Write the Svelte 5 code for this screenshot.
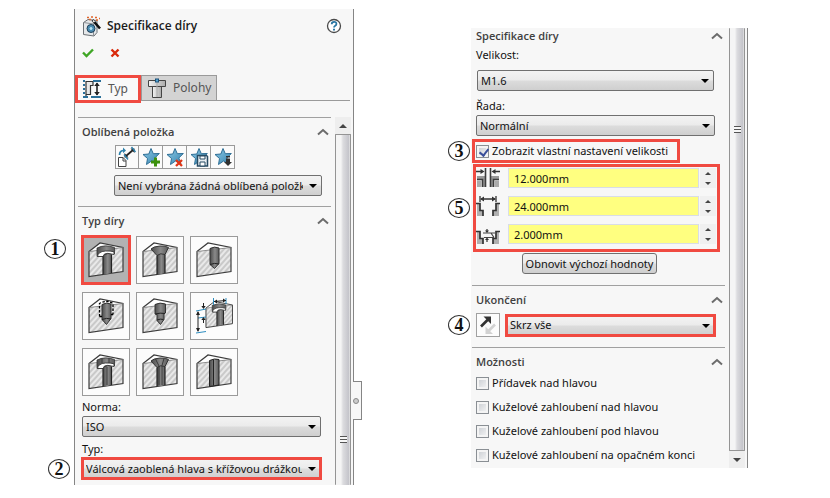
<script>
  const holes = [
    { id: 'counterbore', label: 'Válcové zahloubení' },
    { id: 'countersink', label: 'Kuželové zahloubení' },
    { id: 'drill', label: 'Díra' },
    { id: 'tap', label: 'Přímý závit' },
    { id: 'taper', label: 'Kuželový závit' },
    { id: 'legacy', label: 'Starší verze' },
    { id: 'slot-bore', label: 'Drážka s válcovým zahloubením' },
    { id: 'slot-sink', label: 'Drážka s kuželovým zahloubením' },
    { id: 'slot', label: 'Drážka' }
  ];
  const favorites = [
    { id: 'reset', label: 'Použít výchozí' },
    { id: 'add', label: 'Přidat oblíbenou' },
    { id: 'remove', label: 'Odstranit oblíbenou' },
    { id: 'save', label: 'Uložit oblíbenou' },
    { id: 'load', label: 'Načíst oblíbenou' }
  ];
  const options = [
    'Přídavek nad hlavou',
    'Kuželové zahloubení nad hlavou',
    'Kuželové zahloubení pod hlavou',
    'Kuželové zahloubení na opačném konci'
  ];
  let selected = $state('counterbore');
  let custom = $state(true);
  let sizes = $state([
    { id: 'through', label: 'Průměr průchozí díry', value: '12.000mm' },
    { id: 'bore', label: 'Průměr zahloubení', value: '24.000mm' },
    { id: 'depth', label: 'Hloubka zahloubení', value: '2.000mm' }
  ]);
  function step(i, d) {
    sizes[i].value = (parseFloat(sizes[i].value) + d).toFixed(3) + 'mm';
  }
</script>

{#snippet heading(text)}
  <header class="section-head">
    <h2>{text}</h2>
    <button class="bare" aria-label={'Sbalit ' + text}>
      <svg width="12" height="8" viewBox="0 0 12 8"><path d="M1 6.5 6 2l5 4.5" fill="none" stroke="#6c6c6c" stroke-width="2" /></svg>
    </button>
  </header>
{/snippet}

{#snippet combo(id, text, extra)}
  <div class="combo {extra}">
    <select {id} aria-label={text}><option>{text}</option></select>
  </div>
{/snippet}

{#snippet block(kind)}
  <path d="M7 15.500 18 7 41 11.500Z" fill="#fff" />
  <path d="M7 15.500 41 11.500V35.500L7 40.500Z" fill="#e9e9e9" />
  <path d="M7 15.500 41 11.500V35.500L7 40.500Z" fill="url(#hatch)" />
  <path d="M7 15.500 18 7 41 11.500V35.500L7 40.500Z" fill="none" stroke="#3c3c3c" stroke-width="1.200" />
  <path d="M7 15.500 41 11.500" stroke="#777" stroke-width=".8" />
  {#if kind === 'counterbore' || kind === 'slot-bore' || kind === 'legacy'}
    <path d="M21 18q4-2 8.500-.5V37L21 38.500z" fill="url(#metal)" />
    <path d="M15 12q8-4 17.500-.5V18q-3-1-5-1l-6 2v1.500H15z" fill="url(#metal)" stroke="#333" stroke-width=".8" />
    <path d="M15.500 20.500q.5-5 8-5.500 5-.3 8.500.8V18.500l-2.500-.5q-4-1.300-7 0l-1.500 2.500z" fill="#fff" stroke="#333" stroke-width=".9" />
    <path d="M21 20.500v18M29.500 18.500V37" stroke="#222" stroke-width="1.200" />
    {#if kind === 'slot-bore'}<path d="M20 10.500v4.500M27 10v5M25 19v18" stroke="#333" stroke-width=".9" />{/if}
  {:else if kind === 'countersink' || kind === 'slot-sink'}
    <path d="M21 18h8v19l-8 1.500z" fill="url(#metal)" />
    <path d="M15 13q2-2.500 9-3 6-.2 8.500 1.500L29 18.500q-4.500-2-8 1z" fill="url(#metal)" stroke="#333" />
    <path d="M21 19.500v19M29 18.500V37" stroke="#222" stroke-width="1.200" />
    {#if kind === 'slot-sink'}<path d="M19.500 11l3.500 7v19M28 10.500l-2 7V37" fill="none" stroke="#333" stroke-width=".9" />{/if}
  {:else if kind === 'drill'}
    <path d="M20 12.500q4.500-2.500 9-.5v15.500l-4.500 5-4.500-4z" fill="url(#metal)" stroke="#333" />
    <path d="M20 28.500q4.500-2 9-.5" fill="none" stroke="#222" />
  {:else if kind === 'tap'}
    <path d="M20 12.500q4.500-2.500 9-.5v14.500l-4.500 6-4.500-5z" fill="url(#metal)" stroke="#333" />
    <path d="M17.500 24.500V11.500q7-4 13.500 0V22.500M17.500 24.500h3M31 22.500h-2" fill="none" stroke="#000" stroke-width="1.300" stroke-dasharray="2.500 1.500" />
    <path d="M20 27.500q4.500-2 9-.5" fill="none" stroke="#222" />
  {:else if kind === 'taper'}
    <path d="M19 12.500q5-2.500 10.500-.5v9l-1.500 1v5.500l-3.500 5-3.500-4v-6l-2-.5z" fill="url(#metal)" stroke="#333" />
    <path d="M19.500 22q4.500-1.500 9.500-.5M21 28q3.500-1.500 6.500-.5" fill="none" stroke="#222" />
  {:else if kind === 'slot'}
    <path d="M19.500 12.500q5-2.500 9.500-1V37l-9.500 1.500z" fill="url(#metal)" stroke="#222" />
    <path d="M23.500 11.500v26" stroke="#222" />
  {/if}
{/snippet}

{#snippet star()}
  <path d="M11 2.500l2.300 5.200 6-.2-4.500 4.500 2.200 6-5.500-3-5 3.500 1-6L3 8.500l5.800-.5z" fill="url(#starblue)" stroke="#2f6f96" />
{/snippet}

<svg class="defs" aria-hidden="true">
  <defs>
    <pattern id="hatch" width="4" height="4" patternUnits="userSpaceOnUse" patternTransform="rotate(42)">
      <path d="M2 0V4" stroke="#a2a2a2" stroke-width=".9" />
    </pattern>
    <linearGradient id="metal"><stop offset="0" stop-color="#4b4b4b" /><stop offset=".55" stop-color="#8a8a8a" /><stop offset="1" stop-color="#5a5a5a" /></linearGradient>
    <linearGradient id="starblue" x2="1" y2="1"><stop offset="0" stop-color="#8cc9e6" /><stop offset="1" stop-color="#3583ae" /></linearGradient>
    <linearGradient id="steel"><stop offset="0" stop-color="#f4f4f4" /><stop offset="1" stop-color="#aaa" /></linearGradient>
  </defs>
</svg>

<main>
  <section class="panel left">
    <div class="title">
      <svg width="21" height="21" viewBox="0 0 21 21">
        <path d="M1.500 6.500 6 3.500l9 1v12l-3 3.500-10.500-1.500z" fill="#e5e7e9" stroke="#6b7075" />
        <path d="M1.500 6.500l10 1.500 3.500-3.500M11.500 8v12" fill="none" stroke="#8b9095" />
        <circle cx="9" cy="12.500" r="4" fill="#4f8db2" stroke="#1c3f58" />
        <circle cx="9" cy="12.500" r="2" fill="#b9e0f0" stroke="#3c86ad" />
        <path d="M10.500 4l7.500 8.500" stroke="#111" stroke-width="2.600" />
        <path d="M11 4.500l1.500 1.500" stroke="#fff" stroke-width="1.500" />
        <path d="M5 1.500h2M9 1h2M13 1.500h2M7 3.500h2M14 4h2M17 2.500h1" stroke="#e0642a" stroke-width="1.500" />
      </svg>
      <h1>Specifikace díry</h1>
      <button class="bare" aria-label="Nápověda">
        <svg width="16" height="16" viewBox="0 0 16 16">
          <circle cx="8" cy="8" r="6.500" fill="#fff" stroke="#4a4a4a" stroke-width="1.300" />
          <path d="M5.700 6.300q0-2.400 2.400-2.400t2.300 2q0 1.200-1.200 1.900T8 9.600" fill="none" stroke="#2a76a3" stroke-width="1.800" />
          <path d="M7 10.700h2v1.800H7z" fill="#2a76a3" />
        </svg>
      </button>
    </div>
    <div class="confirm">
      <button class="bare" aria-label="OK"><svg width="12" height="10" viewBox="0 0 12 10"><path d="M1 4.500 4.500 8 11 1.500" fill="none" stroke="#3fa625" stroke-width="2.400" /></svg></button>
      <button class="bare" aria-label="Storno"><svg width="10" height="10" viewBox="0 0 10 10"><path d="M1.500 1.500l7 7M8.500 1.500l-7 7" stroke="#d9290b" stroke-width="2.400" /></svg></button>
    </div>
    <nav class="tabs">
      <button class="tab active">
        <svg width="20" height="20" viewBox="0 0 20 20">
          <path d="M2 1v18" stroke="#2a6f99" stroke-width="2" stroke-dasharray="2 2" />
          <path d="M4 18.500V2.500h7v4H8.500v9H4" fill="#e8e8e8" stroke="#333" stroke-width="1.200" />
          <path d="M11 2h8M2 18h4M9 18h10" stroke="#2a6f99" stroke-width="2" />
          <path d="M15 4v12" stroke="#222" stroke-width="1.600" /><path d="M12.200 7 15 3.500l2.800 3.500zM12.200 13 15 16.500l2.800-3.500z" fill="#222" />
        </svg>
        Typ
      </button>
      <button class="tab">
        <svg width="20" height="20" viewBox="0 0 20 20">
          <path d="M5.500 8.500h9v11h-9z" fill="url(#steel)" stroke="#444" />
          <path d="M1.500 2.500h17v6h-17z" fill="url(#steel)" stroke="#444" />
          <path d="M10 4.500V19" stroke="#aaa" />
          <rect x="8.500" y="1" width="3" height="3" fill="#54a8d8" stroke="#1c527a" />
        </svg>
        Polohy
      </button>
    </nav>
    <div class="body">
      <div class="content">
        <section class="group favorites">
          {@render heading('Oblíbená položka')}
          <div class="fav-bar">
            {#each favorites as f}
              <button aria-label={f.label}>
                <svg width="22" height="22" viewBox="0 0 22 22">
                  {#if f.id === 'reset'}
                    <path d="M2.500 11.500h4.500l3 3v6H2.500zM7 11.500v3.500h3" fill="#fff" stroke="#444" />
                    <path d="M3.500 9q0-4.500 4.500-4.500" fill="none" stroke="#2d81ac" stroke-width="1.700" /><path d="M7 1.500l3 3-3 2.700z" fill="#2d81ac" />
                    <path d="M10 10l7-6" stroke="#222" stroke-width="1.800" /><path d="M8.500 11.500v-4.500l4 4.500zM18.500 2.500v4.500L14.500 2.500z" fill="#222" />
                    <path d="M8 8.500l4 5M15.500 1l4 5" stroke="#2d81ac" stroke-width="1.400" />
                  {:else}
                    {@render star()}
                    {#if f.id === 'add'}<path d="M15.500 11.500v9M11 16h9" stroke="#3c910d" stroke-width="3" />
                    {:else if f.id === 'remove'}<path d="M12 14l6 6M18 14l-6 6" stroke="#e03414" stroke-width="2.300" />
                    {:else if f.id === 'save'}
                      <path d="M9.500 9.500h9l1 1v9.500h-10z" fill="#e8eef2" stroke="#274a62" stroke-width="1.500" /><path d="M12 10h5v3h-5zM12 16h5v4h-5z" fill="#fff" stroke="#274a62" />
                    {:else}<path d="M14 10h4v1.500h-4zM14 12.500h4v3.500h2l-4 4-4-4h2z" fill="#303030" />{/if}
                  {/if}
                </svg>
              </button>
            {/each}
          </div>
          <div class="fav-select">{@render combo('favorite', 'Není vybrána žádná oblíbená položka', '')}</div>
        </section>
        <section class="group types">
          {@render heading('Typ díry')}
          <div class="grid">
            <span class="callout wide">1</span>
            {#each holes as h}
              <button class="tile" class:on={selected === h.id} aria-label={h.label} aria-pressed={selected === h.id} onclick={() => (selected = h.id)}>
                <svg width="46" height="46" viewBox="1 1 46 46">
                  {#if h.id === 'legacy'}
                    <g transform="translate(10.500 4) scale(.78)">{@render block('legacy')}</g>
                    <path d="M23.500 6v7M36 6v6M6 19l10-2M8 26l8-1M6 41l10-1.500" stroke="#2d8dc0" />
                    <path d="M24 9.500l12-1M8 20v19M13.500 11v5M13.500 26v5" stroke="#222" />
                    <path d="M24 9.500l3-2v4zM36 8.500l-3-2v4zM8 19l-2 4h4zM8 40l-2-4h4zM13.500 17l-2.200-3h4.400zM13.500 25l-2.200 3h4.400z" fill="#222" />
                  {:else}
                    {@render block(h.id)}
                  {/if}
                </svg>
              </button>
            {/each}
          </div>
          <label for="standard">Norma:</label>
          {@render combo('standard', 'ISO', '')}
          <label class="next" for="kind">Typ:</label>
          <div class="anchor">
            <span class="callout">2</span>
            {@render combo('kind', 'Válcová zaoblená hlava s křížovou drážkou', 'marked')}
          </div>
        </section>
      </div>
      <div class="scroll">
        <button class="arrow up" aria-label="Posunout nahoru"></button>
        <div class="thumb low"><i></i></div>
      </div>
    </div>
    <div class="handle"><i></i></div>
  </section>

  <section class="panel right">
    <div class="body">
      <div class="content">
        <section class="group first">
          {@render heading('Specifikace díry')}
          <label for="size">Velikost:</label>
          <div class="size">{@render combo('size', 'M1.6', '')}</div>
          <label for="fit">Řada:</label>
          {@render combo('fit', 'Normální', '')}
          <div class="frame custom">
            <span class="callout">3</span>
            <label class="check"><input type="checkbox" bind:checked={custom} />Zobrazit vlastní nastavení velikosti</label>
          </div>
          <div class="frame sizes">
            <span class="callout">5</span>
            {#each sizes as s, i}
              <div class="row">
                <svg width="24" height="22" viewBox="0 0 24 22">
                  {#if s.id === 'through'}
                    <path d="M1 9h8v11H6v-7H1zM23 9h-8v11h3v-7h5z" fill="#999" />
                    <path d="M1 12.500h5.500v7.500M9.500 1v19M14.500 1v19M23 12.500h-5.500v7.500" fill="none" stroke="#3c3c3c" stroke-width="1.600" />
                    <path d="M1 13.500h4.500V20H1zM18.500 13.500H23V20h-4.500z" fill="#aaa" />
                    <path d="M0 4.500h6M24 4.500h-6" stroke="#333" stroke-width="1.300" /><path d="M4.500 2l4 2.500-4 2.500zM19.500 2l-4 2.500 4 2.500z" fill="#333" />
                  {:else if s.id === 'bore'}
                    <path d="M1 9h3v7h3v5H1zM23 9h-3v7h-3v5h6z" fill="#b0b0b0" />
                    <path d="M0 8.500h4v7h3v5.500M24 8.500h-4v7h-3v5.500" fill="none" stroke="#333" stroke-width="1.700" />
                    <path d="M4 1v6M20 1v6M5 4h14" stroke="#333" stroke-width="1.300" /><path d="M4 4l4-2.500v5zM20 4l-4-2.500v5z" fill="#333" />
                  {:else}
                    <path d="M1 9h3v7h3v5H1zM23 9h-3v7h-3v5h6z" fill="#b0b0b0" />
                    <path d="M0 8.500h4v7h3v5.500M24 8.500h-4v7h-3v5.500" fill="none" stroke="#333" stroke-width="1.700" />
                    <path d="M7 10h12M8 14.500h10M15 10l3 4.500" fill="none" stroke="#444" stroke-width="1.200" />
                    <path d="M11 6v3M11 16v3" stroke="#333" stroke-width="1.200" /><path d="M9 7.500h4L11 10zM9 17h4l-2-2.500z" fill="#333" />
                  {/if}
                </svg>
                <input type="text" aria-label={s.label} bind:value={s.value} />
                <div class="spin">
                  <button class="up" aria-label="Zvýšit" onclick={() => step(i, 1)}></button>
                  <button class="down" aria-label="Snížit" onclick={() => step(i, -1)}></button>
                </div>
              </div>
            {/each}
          </div>
          <div class="restore"><button>Obnovit výchozí hodnoty</button></div>
        </section>
        <section class="group end">
          {@render heading('Ukončení')}
          <div class="end-row">
            <span class="callout">4</span>
            <button class="flip" aria-label="Obrátit směr">
              <svg width="22" height="22" viewBox="0 0 22 22">
                <path d="M4 12.500 11.500 5" stroke="#333" stroke-width="2.600" /><path d="M6.500 2.500h7.500V10z" fill="#333" />
                <path d="M18 10.500l-7 7" stroke="#d2d2d2" stroke-width="2.600" /><path d="M8.500 12.500v7.500H16z" fill="#d2d2d2" />
              </svg>
            </button>
            {@render combo('end', 'Skrz vše', 'marked')}
          </div>
        </section>
        <section class="group opts">
          {@render heading('Možnosti')}
          {#each options as o}
            <label class="check"><input type="checkbox" />{o}</label>
          {/each}
        </section>
      </div>
      <div class="scroll">
        <div class="thumb high"><i></i></div>
        <button class="arrow down" aria-label="Posunout dolů"></button>
      </div>
    </div>
  </section>
</main>

<style>
  :global(body) { background: #fff; }
  * { box-sizing: border-box; }
  .defs { display: block; width: 0; height: 0; }
  main {
    display: grid;
    grid-template-columns: minmax(0, 280fr) minmax(0, 277fr);
    column-gap: 117px;
    align-items: start;
    padding: 9px 82px 12px 74px;
    font: 11px/16px "Noto Sans", "Open Sans", sans-serif;
    color: #111;
  }
  button, input, select { font: inherit; color: inherit; margin: 0; }
  button { display: flex; align-items: center; justify-content: center; padding: 0; }
  svg { display: block; flex: none; }
  .bare { border: 0; background: none; }
  .panel { position: relative; background: #f7f7f7; border-right: 1px solid #858585; }
  .left { border-left: 1px solid #858585; padding-top: 7px; }
  .right { margin-top: 19px; }
  .title { display: flex; align-items: center; gap: 4px; height: 20px; padding: 0 11px 0 7px; }
  h1 { flex: 1; margin: 0; font: 600 12px/20px "Open Sans", "Noto Sans", sans-serif; color: #1b1b1b; }
  .confirm { display: flex; gap: 16px; height: 16px; margin-top: 9px; padding-left: 7px; }
  .tabs { display: flex; height: 26px; margin: 14px 3px 0 0; border-bottom: 1px solid #9a9a9a; }
  .tab { gap: 6px; height: 25px; padding: 0 5px; border: 1px solid #9a9a9a; border-bottom: 0; background: #d3d3d3; color: #555; font-size: 12px; }
  .tab.active { width: 66px; height: 28px; justify-content: flex-start; border: 3px solid #f04a41; background: #f9f9f9; padding: 0 4px; }
  .body { display: flex; }
  .left .body { margin-top: 16px; }
  .content { flex: 1; min-width: 0; }
  .group { border-top: 1px solid #a0a0a0; padding: 6px 10px 0 4px; margin: 0 4px 0 3px; }
  .right .group { margin: 0 4px 0 1px; }
  .right .first { border: 0; padding-top: 0; padding-bottom: 11px; }
  .section-head { display: flex; justify-content: space-between; align-items: center; height: 16px; margin-right: -8px; }
  h2 { margin: 0; font: 600 11px/16px "Open Sans", "Noto Sans", sans-serif; color: #3f3f3f; }
  label { display: block; height: 16px; }

  .combo { position: relative; flex: 1; min-width: 0; }
  .combo select {
    display: block; width: 100%; height: 21px; padding: 0 18px 0 3px;
    border: 1px solid #707070; border-radius: 2px; appearance: none;
    background: linear-gradient(#f3f3f3, #ebebeb 48%, #dcdcdc 52%, #cfcfcf);
  }
  .combo::after {
    content: ""; position: absolute; right: 5px; top: 9px; pointer-events: none;
    border: 4px solid transparent; border-top-color: #000; border-bottom: 0;
  }
  .marked select { outline: 3px solid #f04a41; outline-offset: -2px; border-color: transparent; border-radius: 0; }

  .fav-bar { display: flex; margin: 5px 0 0 33px; }
  .fav-bar button { width: 24px; height: 24px; border: 1px solid #9a9a9a; border-left-width: 0; background: #fbfbfb; }
  .fav-bar button:first-child { border-left-width: 1px; }
  .fav-select { margin: 6px -1px 10px 32px; }
  .types { padding-bottom: 6px; }
  .grid { position: relative; display: grid; grid-template-columns: repeat(3, 48px); gap: 8px 6px; margin: 7px 0 3px; }
  .tile { width: 48px; height: 48px; border: 1px solid #9a9a9a; background: #fcfcfc; }
  .tile.on { background: #b2b2b2; border-color: #b2b2b2; outline: 3px solid #f04a41; outline-offset: -2px; }
  .types .combo { margin-top: 1px; }
  .next { margin-top: 4px; }
  .anchor { position: relative; }

  .callout {
    position: absolute; left: -34px; top: 50%; width: 22px; height: 20px; margin-top: -10px;
    border: 1px solid #333; border-radius: 50%; background: #fff;
    font: bold 18px/18px "Liberation Serif", serif; text-align: center; color: #111;
  }
  .callout.wide { left: -38px; top: 13px; margin-top: -10px; }

  .scroll { display: flex; flex-direction: column; width: 16px; margin-right: 2px; background: #f0f0f0; }
  .arrow { height: 17px; border: 0; background: #eee; }
  .arrow::after, .spin button::after { content: ""; border: 4px solid transparent; border-width: 0 4px 4px; border-bottom-color: #444; }
  .arrow.down::after { border-width: 4px 4px 0; border-top-color: #444; }
  .thumb { flex: 1; border: 1px solid #949494; border-radius: 1px; background: linear-gradient(90deg, #f5f5f5 35%, #dcdcdf 50%, #c5c5cb 90%, #e6e6e6); }
  .thumb i { display: block; width: 7px; height: 7px; margin: 0 auto; background: repeating-linear-gradient(#555 0 1px, #f7f7f7 1px 3px); }
  .thumb.low { border-bottom: 0; }
  .thumb.low i { margin-top: 301px; }
  .thumb.high { border-top: 0; }
  .thumb.high i { margin-top: 98px; }
  .handle {
    position: absolute; right: -9px; bottom: 65px; width: 9px; height: 39px;
    border: 1px solid #858585; border-left: 0; background: #f7f7f7; box-shadow: -1px 0 #f7f7f7;
    display: flex; align-items: center;
  }
  .handle i { width: 6px; height: 6px; border: 1px solid #888; border-radius: 50%; background: #ccc; }

  .first > label { margin-top: 3px; }
  .size { margin: 7px 1px 7px; }
  .first > .size + label { margin: 0 0 1px; }
  .frame { position: relative; border: 3px solid #f04a41; }
  .custom { width: fit-content; height: 24px; margin: 3px 0 0 -4px; padding: 1px 9px 0 1px; }
  .custom .callout { left: -27px; }
  .check { display: flex; align-items: center; gap: 3px; }
  .check input {
    appearance: none; flex: none; width: 13px; height: 13px; border: 1px solid #8a8f94;
    background: linear-gradient(135deg, #c6cacf, #f8f8f8); box-shadow: inset 0 0 0 2px #f4f4f4; position: relative;
  }
  .check input:checked::after {
    content: ""; position: absolute; left: 4px; top: 1px; width: 4px; height: 7px;
    border: solid #3a4f9a; border-width: 0 2px 2px 0; transform: rotate(38deg);
  }
  .sizes { display: flex; flex-direction: column; gap: 8px; margin: 1px -5px 0 -3px; padding: 1px 1px 5px 0; }
  .sizes .callout { left: -28px; }
  .row { display: flex; align-items: center; height: 20px; }
  .row input { flex: 1; min-width: 0; height: 20px; margin-left: 8px; padding: 0 5px; border: 1px solid #d9dde6; background: #ffff80; outline: 0; }
  .spin { display: flex; flex-direction: column; width: 16px; height: 20px; margin-left: 1px; background: #f0f0f0; }
  .spin button { flex: 1; border: 0; background: none; }
  .spin button::after { border-width: 0 3px 3px; }
  .spin .down::after { border-width: 3px 3px 0; border-top-color: #444; }
  .restore { display: flex; justify-content: center; margin: 1px 12px 0 0; }
  .restore button { height: 21px; padding: 0 3px; border: 1px solid #707070; border-radius: 3px; background: linear-gradient(#f3f3f3, #ebebeb 48%, #dcdcdc 52%, #cfcfcf); }
  .end-row { position: relative; display: flex; align-items: center; gap: 6px; margin: 5px 0 10px; }
  .end-row .callout { left: -28px; }
  .flip { width: 24px; height: 24px; border: 1px solid #a0a0a0; background: #fcfcfc; }
  .opts { padding-bottom: 1px; padding-right: 0; }
  .opts .section-head { margin: 0 2px 1px 0; }
  .opts .check { height: 24px; }
</style>
